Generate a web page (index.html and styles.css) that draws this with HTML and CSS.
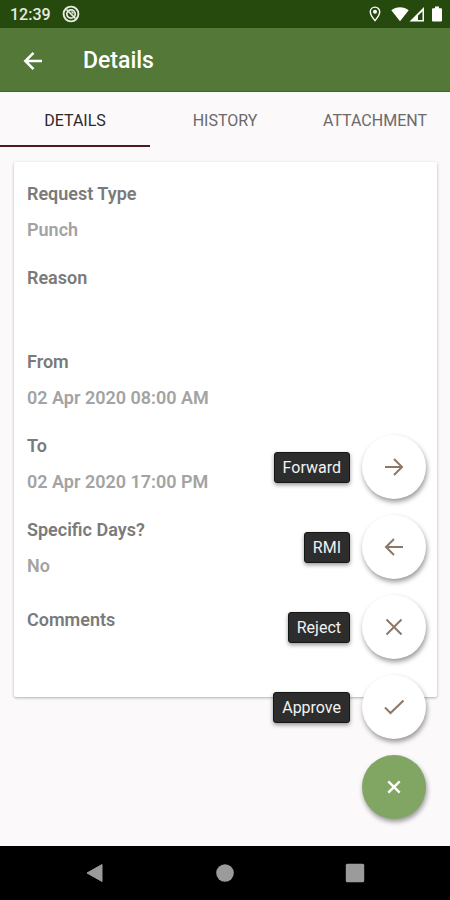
FILE: index.html
```html
<!DOCTYPE html>
<html lang="en">
<head>
<meta charset="utf-8">
<meta name="viewport" content="width=device-width, initial-scale=1">
<title>Details</title>
<link rel="stylesheet" href="styles.css">
</head>
<body>
<div class="screen">
  <div class="status-bar">
    <span class="clock">12:39</span>
    <svg class="status-app" viewBox="0 0 18 18" width="18" height="18" aria-hidden="true">
      <circle cx="9" cy="9" r="7.4" fill="none" stroke="#e6ece1" stroke-width="1.9"/>
      <circle cx="9" cy="9" r="4.2" fill="none" stroke="#e6ece1" stroke-width="1.7"/>
      <path d="M4.5 4.5l9 9" stroke="#e6ece1" stroke-width="1.7"/>
      <path d="M8.500 6.500h3v3z" fill="#e6ece1"/>
    </svg>
    <div class="status-icons">
      <svg viewBox="0 0 12 16" width="12" height="16" aria-hidden="true">
        <path d="M6 1.100a4.700 4.700 0 0 0-4.700 4.700C1.300 9.200 6 14.600 6 14.600s4.700-5.400 4.700-8.800A4.700 4.700 0 0 0 6 1.100z" fill="none" stroke="#fff" stroke-width="1.400"/>
        <circle cx="6" cy="5.800" r="2" fill="#fff"/>
      </svg>
      <svg class="wifi" viewBox="0 0 18 16" width="18" height="16" aria-hidden="true">
        <path d="M9 15.300L.3 4.300C2.800 2.200 5.800 1.200 9 1.200s6.200 1 8.700 3.100z" fill="#fff"/>
      </svg>
      <svg viewBox="0 0 16 16" width="16" height="16" aria-hidden="true">
        <path fill-rule="evenodd" d="M.5 15.500L15 1v14.500zM9 14h4.500V5.500L9 9.500z" fill="#fff"/>
      </svg>
      <svg class="battery" viewBox="0 0 12 16" width="12" height="16" aria-hidden="true">
        <path d="M4 .5h4v1.700h2q1 0 1 1v11.300q0 1-1 1H2q-1 0-1-1V3.200q0-1 1-1h2z" fill="#fff"/>
      </svg>
    </div>
  </div>

  <header class="app-bar">
    <button class="back" type="button" aria-label="Back">
      <svg viewBox="0 0 20 20" width="20" height="20" aria-hidden="true">
        <path d="M19 10H2.500M10.500 1.800L2.300 10l8.200 8.200" fill="none" stroke="#fff" stroke-width="2.500"/>
      </svg>
    </button>
    <h1>Details</h1>
  </header>

  <nav class="tabs" aria-label="Sections">
    <a class="tab active" href="#details" aria-current="page">DETAILS</a>
    <a class="tab" href="#history">HISTORY</a>
    <a class="tab" href="#attachment">ATTACHMENT</a>
  </nav>

  <main class="content" id="details">
    <dl class="card">
      <div class="field"><dt>Request Type</dt><dd>Punch</dd></div>
      <div class="field"><dt>Reason</dt><dd></dd></div>
      <div class="field"><dt>From</dt><dd>02 Apr 2020 08:00 AM</dd></div>
      <div class="field"><dt>To</dt><dd>02 Apr 2020 17:00 PM</dd></div>
      <div class="field"><dt>Specific Days?</dt><dd>No</dd></div>
      <div class="field comments"><dt>Comments</dt><dd></dd></div>
    </dl>

    <div class="actions">
      <div class="action">
        <label class="tip" for="forward">Forward</label>
        <button class="fab" id="forward" type="button">
          <svg viewBox="0 0 20 20" width="20" height="20" aria-hidden="true"><path d="M1 10h16.500M10 2l8 8-8 8"/></svg>
        </button>
      </div>
      <div class="action">
        <label class="tip" for="rmi">RMI</label>
        <button class="fab" id="rmi" type="button">
          <svg viewBox="0 0 20 20" width="20" height="20" aria-hidden="true"><path d="M19 10H2.500M10 2l-8 8 8 8"/></svg>
        </button>
      </div>
      <div class="action">
        <label class="tip" for="reject">Reject</label>
        <button class="fab" id="reject" type="button">
          <svg viewBox="0 0 20 20" width="20" height="20" aria-hidden="true"><path d="M2.500 2.500l15 15M17.500 2.500l-15 15"/></svg>
        </button>
      </div>
      <div class="action">
        <label class="tip" for="approve">Approve</label>
        <button class="fab" id="approve" type="button">
          <svg viewBox="0 0 20 20" width="20" height="20" aria-hidden="true"><path d="M1 10.500l5.500 5.500L19.500 3.500"/></svg>
        </button>
      </div>
      <div class="action">
        <button class="fab close" type="button" aria-label="Close menu">
          <svg viewBox="0 0 20 20" width="20" height="20" aria-hidden="true"><path d="M4.300 4.300l11.400 11.400M15.700 4.300L4.300 15.700"/></svg>
        </button>
      </div>
    </div>
  </main>

  <div class="system-nav">
    <button type="button" aria-label="System back">
      <svg viewBox="0 0 20 20" width="20" height="20" aria-hidden="true"><path d="M2 10L17 1.500v17z" fill="#9b9b9b" stroke="#9b9b9b" stroke-linejoin="round"/></svg>
    </button>
    <button type="button" aria-label="Home">
      <svg viewBox="0 0 20 20" width="20" height="20" aria-hidden="true"><circle cx="10" cy="10" r="8.800" fill="#9b9b9b"/></svg>
    </button>
    <button type="button" aria-label="Recent apps">
      <svg viewBox="0 0 20 20" width="20" height="20" aria-hidden="true"><rect x=".8" y=".8" width="18.400" height="18.400" rx="1.500" fill="#9b9b9b"/></svg>
    </button>
  </div>
</div>
</body>
</html>
```

FILE: styles.css
```css
* {
  box-sizing: border-box;
}

body {
  margin: 0;
  font-family: Roboto, "Liberation Sans", sans-serif;
  background: #fbf9fa;
}

button {
  padding: 0;
  border: 0;
  background: none;
  cursor: pointer;
}

svg {
  display: block;
}

.screen {
  display: flex;
  flex-direction: column;
  min-height: 100vh;
}

.status-bar {
  display: flex;
  align-items: center;
  height: 28px;
  padding: 0 7px 0 10px;
  background: #264a0d;
  color: #e6ece1;
}

.clock {
  padding-top: 2px;
  font-size: 16px;
  font-weight: 500;
  line-height: 28px;
}

.status-app {
  margin-left: 11px;
}

.status-icons {
  display: flex;
  align-items: center;
  margin-left: auto;
}

.wifi {
  margin-left: 10px;
}

.battery {
  margin-left: 6px;
}

.app-bar {
  display: flex;
  align-items: center;
  gap: 40px;
  height: 64px;
  padding: 2px 23px 0;
  background: #537837;
  border-bottom: 1px solid #3f6b1c;
  color: #fff;
}

.app-bar h1 {
  margin: 0;
  font-size: 23px;
  font-weight: 500;
  line-height: 30px;
}

.tabs {
  display: grid;
  grid-template-columns: repeat(3, 1fr);
}

.tab {
  height: 55px;
  border-bottom: 2px solid transparent;
  color: #6b696a;
  font-size: 16px;
  line-height: 58px;
  text-align: center;
  text-decoration: none;
}

.tab.active {
  border-bottom-color: #4f1a20;
  color: #2b292a;
}

.content {
  position: relative;
  flex: 1;
  padding: 15px 13px 149px 14px;
}

.card {
  display: flex;
  flex-direction: column;
  gap: 24px;
  margin: 0;
  padding: 20px 13px 29px;
  border-radius: 2px;
  background: #fff;
  box-shadow: 0 1px 3px rgba(0, 0, 0, 0.3);
  font-size: 18px;
  font-weight: 600;
  line-height: 24px;
}

.field {
  display: grid;
  gap: 12px;
}

.field dt {
  color: #7a7a7a;
}

.field dd {
  min-height: 24px;
  margin: 0;
  color: #a3a3a3;
}

.comments {
  padding-top: 6px;
}

.actions {
  position: absolute;
  right: 24px;
  bottom: 27px;
  display: flex;
  flex-direction: column;
  gap: 16px;
}

.action {
  display: flex;
  align-items: center;
  justify-content: flex-end;
  gap: 12px;
}

.tip {
  padding: 1px 8px 0;
  border: 1px solid #151515;
  border-radius: 3px;
  background: #2d2d2d;
  box-shadow: 0 2px 4px rgba(0, 0, 0, 0.4);
  color: #f2f2f2;
  font-size: 16px;
  line-height: 28px;
}

.fab {
  display: grid;
  place-items: center;
  width: 64px;
  height: 64px;
  border-radius: 50%;
  background: #fff;
  box-shadow: 1px 3px 5px rgba(0, 0, 0, 0.4);
}

.fab path {
  fill: none;
  stroke: #8d7868;
  stroke-width: 2;
}

.fab.close {
  background: #81a663;
}

.fab.close path {
  stroke: #fff;
  stroke-width: 2.4;
}

.system-nav {
  display: flex;
  align-items: center;
  justify-content: center;
  gap: 110px;
  height: 54px;
  background: #000;
}
```
